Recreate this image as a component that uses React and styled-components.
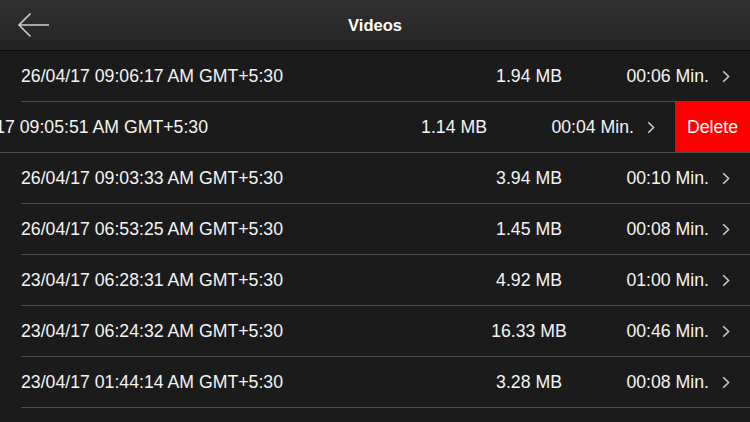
import React from "react";
import styled, { createGlobalStyle } from "styled-components";

const GlobalStyle = createGlobalStyle`
  html, body {
    margin: 0;
    padding: 0;
    background: #1b1b1b;
  }
  body {
    font-family: "Liberation Sans", Arial, sans-serif;
    -webkit-font-smoothing: antialiased;
  }
`;

const Page = styled.div`
  width: 750px;
  height: 422px;
  overflow: hidden;
  background: #1b1b1b;
  display: flex;
  flex-direction: column;
`;

const NavBar = styled.div`
  height: 51px;
  flex: 0 0 51px;
  display: grid;
  grid-template-columns: 80px 1fr 80px;
  align-items: center;
  background: linear-gradient(#313131, #232323);
  border-bottom: 1px solid #0c0c0c;
  box-sizing: border-box;
`;

const BackButton = styled.button`
  background: none;
  border: 0;
  padding: 0 0 0 17px;
  height: 50px;
  display: flex;
  align-items: center;
  cursor: pointer;
`;

const Title = styled.h1`
  margin: 0;
  text-align: center;
  color: #ffffff;
  font-size: 16.5px;
  font-weight: 700;
`;

const List = styled.div`
  display: flex;
  flex-direction: column;
`;

const RowShell = styled.div`
  position: relative;
  height: 51px;
  overflow: hidden;
`;

const RowContent = styled.div`
  height: 51px;
  padding-left: 21px;
  box-sizing: border-box;
  transform: translateX(${(p) => -p.$offset}px);
  background: #1b1b1b;
`;

const RowInner = styled.div`
  height: 51px;
  box-sizing: border-box;
  border-bottom: 1px solid #4e4e4e;
  display: grid;
  grid-template-columns: 1fr 120px 133px 8px;
  align-items: center;
  padding-right: 20px;
  padding-top: 1px;
  color: #f4f4f4;
  font-size: 17.7px;
`;

const DateCell = styled.span`
  white-space: nowrap;
`;

const SizeCell = styled.span`
  text-align: center;
  white-space: nowrap;
`;

const DurationCell = styled.span`
  text-align: right;
  white-space: nowrap;
  margin-right: 13px;
`;

const Chevron = styled.svg`
  display: block;
`;

const DeleteButton = styled.button`
  position: absolute;
  top: 0;
  right: 0;
  bottom: 0;
  width: 75px;
  border: 0;
  border-bottom: 1px solid #4e4e4e;
  background: #ff0000;
  color: #ffffff;
  font-family: "Liberation Sans", Arial, sans-serif;
  font-size: 17.7px;
  padding: 1px 0 0;
`;

const videos = [
  { date: "26/04/17 09:06:17 AM GMT+5:30", size: "1.94 MB", dur: "00:06 Min." },
  { date: "26/04/17 09:05:51 AM GMT+5:30", size: "1.14 MB", dur: "00:04 Min.", swiped: true },
  { date: "26/04/17 09:03:33 AM GMT+5:30", size: "3.94 MB", dur: "00:10 Min." },
  { date: "26/04/17 06:53:25 AM GMT+5:30", size: "1.45 MB", dur: "00:08 Min." },
  { date: "23/04/17 06:28:31 AM GMT+5:30", size: "4.92 MB", dur: "01:00 Min." },
  { date: "23/04/17 06:24:32 AM GMT+5:30", size: "16.33 MB", dur: "00:46 Min." },
  { date: "23/04/17 01:44:14 AM GMT+5:30", size: "3.28 MB", dur: "00:08 Min." },
];

const VideoRow = ({ data }) => (
  <RowShell>
    {data.swiped && <DeleteButton>Delete</DeleteButton>}
    <RowContent $offset={data.swiped ? 75 : 0}>
      <RowInner>
        <DateCell>{data.date}</DateCell>
        <SizeCell>{data.size}</SizeCell>
        <DurationCell>{data.dur}</DurationCell>
        <Chevron width="8" height="13" viewBox="0 0 8 13">
          <path d="M1.2 1.2 L6.6 6.5 L1.2 11.8" fill="none" stroke="#d0d0d0" strokeWidth="1.5" />
        </Chevron>
      </RowInner>
    </RowContent>
  </RowShell>
);

const App = () => {
  return (
    <Page>
      <GlobalStyle />
      <NavBar>
        <BackButton>
          <svg width="34" height="28" viewBox="0 0 34 28">
            <path d="M32 14 H3 M13.5 2.5 L2 14 L13.5 25.5" fill="none" stroke="#cfcfcf" strokeWidth="1.6" />
          </svg>
        </BackButton>
        <Title>Videos</Title>
        <div />
      </NavBar>
      <List>
        {videos.map((v, i) => (
          <VideoRow key={i} data={v} />
        ))}
      </List>
    </Page>
  );
};

export default App;
